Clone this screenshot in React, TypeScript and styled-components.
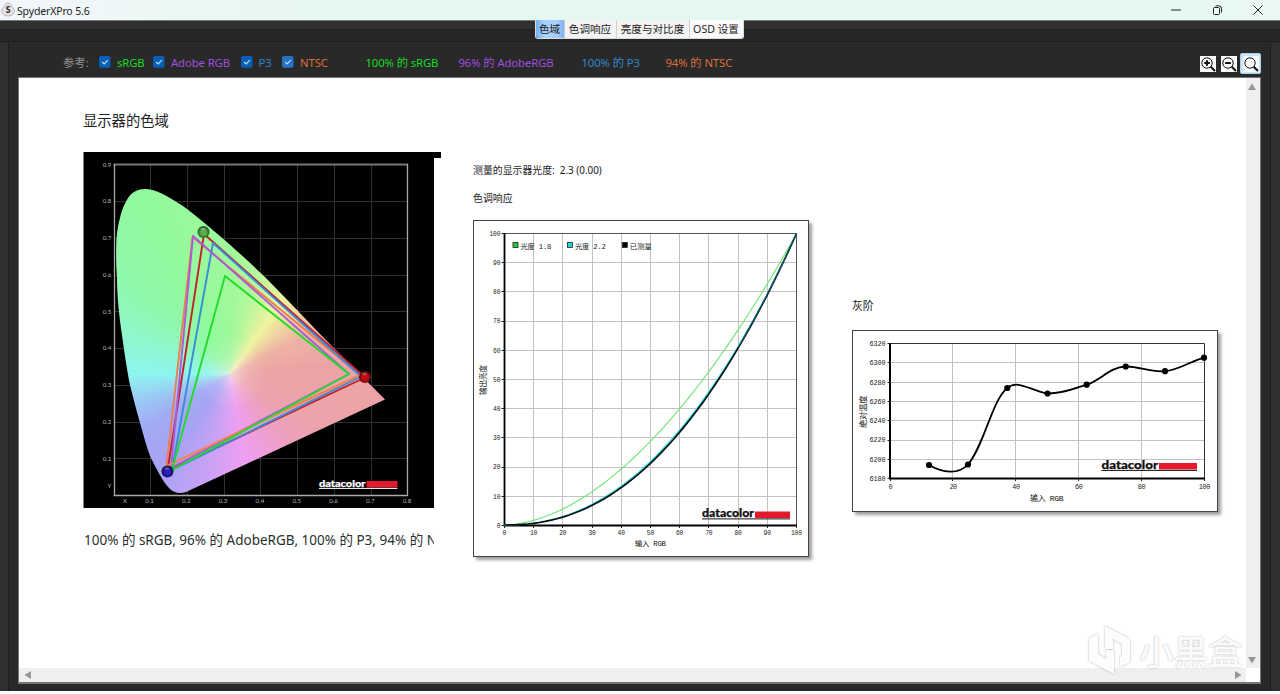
import React from "react";
import styled, { createGlobalStyle } from "styled-components";

const sans = `"Noto Sans", "Noto Sans CJK SC", sans-serif`;
const mono = `"Liberation Mono", "Noto Sans CJK SC", monospace`;

const Global = createGlobalStyle`
  * { box-sizing: border-box; }
  html, body { margin: 0; background: #fbfbfb; overflow: hidden; }
  body { font-family: ${sans}; color: #222; }
`;

const Window = styled.div`
  position: relative;
  width: 1280px;
  height: 694px;
  display: flex;
  flex-direction: column;
  overflow: hidden;
`;

const TitleBar = styled.header`
  height: 21px;
  flex: none;
  display: flex;
  align-items: center;
  padding: 0 16px 1px 1px;
  background: linear-gradient(90deg, #f4f5fb 0, #edf8f6 150px, #e4f7f0 420px, #e4f7f0 1150px, #ebf9f4 1280px);
  border-bottom: 1px solid #6f7b78;
`;

const AppName = styled.span`
  font-size: 10.5px;
  line-height: 20px;
  margin-left: 2px;
  padding-top: 2px;
  letter-spacing: -0.15px;
  color: #222;
`;

const WindowButtons = styled.div`
  display: flex;
  gap: 29px;
  margin-left: auto;
  height: 12px;
`;

const Body = styled.main`
  height: 670px;
  flex: none;
  display: flex;
  flex-direction: column;
  background: #282828;
`;

const TabStrip = styled.nav`
  height: 22px;
  flex: none;
  display: flex;
  justify-content: center;
  align-items: flex-start;
  padding-right: 2px;
  background: linear-gradient(#303030 0 8px, #1e1e1e 8px 9px, #262626 9px 20px, #1d1d1d 20px 21px, #2a2a2a 21px);
`;

const TabGroup = styled.div`
  display: flex;
  height: 19px;
  margin-top: -1px;
  border: 1px solid #d8dcdf;
  border-top: 0;
  border-radius: 0 0 3px 3px;
  overflow: hidden;
`;

const Tab = styled.button<{ $w: number; $active?: boolean }>`
  width: ${(p) => p.$w}px;
  padding: 1px 0 0;
  border: 0;
  border-right: 1px solid #cfcfcf;
  background: ${(p) => (p.$active ? "linear-gradient(90deg,#74b0f2,#a9d0fb 30%,#a9d0fb 75%,#78b2f2)" : "#f3f3f3")};
  font: 10.6px/17px ${sans};
  color: #1c1c1c;
  white-space: nowrap;
  &:last-child { border-right: 0; background: #fafafa; }
`;

const Frame = styled.div`
  flex: 1;
  display: flex;
  flex-direction: column;
  padding: 0 19px 7px 18px;
  background: linear-gradient(90deg, #303030 0 8px, #1e1e1e 8px 9px, #292929 9px 1270px, #1e1e1e 1270px 1271px, #303030 1271px);
`;

const Toolbar = styled.div`
  height: 34px;
  flex: none;
  display: flex;
  align-items: center;
  padding: 6px 0 0 45px;
`;

const Cell = styled.span<{ $w: number; $c: string }>`
  width: ${(p) => p.$w}px;
  flex: none;
  color: ${(p) => p.$c};
  font-size: 11.3px;
  letter-spacing: -0.1px;
  line-height: 16px;
  white-space: nowrap;
`;

const Check = styled.span<{ $light?: boolean }>`
  width: 18px;
  flex: none;
  height: 15px;
  svg { display: block; fill: ${(p) => (p.$light ? "#2673c4" : "#0a60b8")}; }
`;

const Tools = styled.div`
  display: flex;
  align-items: center;
  gap: 3px;
  margin-left: auto;
  padding-top: 1px;
`;

const Tool = styled.button<{ $active?: boolean }>`
  width: ${(p) => (p.$active ? 21 : 18)}px;
  height: 21px;
  padding: 0;
  display: flex;
  align-items: center;
  justify-content: ${(p) => (p.$active ? "center" : "flex-end")};
  border: ${(p) => (p.$active ? "1px solid #a9d4ee" : "0")};
  border-radius: 2px;
  background: ${(p) => (p.$active ? "#c9e5f6" : "transparent")};
  svg { flex: none; }
`;

const Viewport = styled.section`
  flex: 1;
  display: grid;
  grid-template-columns: 1fr 14px;
  grid-template-rows: 1fr 14px;
  border: 1px solid #777;
  border-bottom-width: 2px;
  background: #fff;
`;

const Page = styled.div`
  display: flex;
  padding: 32px 0 0 64px;
  align-items: flex-start;
  overflow: hidden;
`;

const Scroll = styled.div<{ $vertical?: boolean }>`
  display: flex;
  flex-direction: ${(p) => (p.$vertical ? "column" : "row")};
  justify-content: space-between;
  align-items: center;
  padding: ${(p) => (p.$vertical ? "5px 2px 4px 0" : "0 4px 0 5px")};
  background: #efefef;
`;

const GamutColumn = styled.article`
  width: 390px;
  flex: none;
`;

const ToneColumn = styled.article`
  width: 379px;
  flex: none;
  padding-top: 49px;
`;

const GrayColumn = styled.article`
  padding-top: 185px;
`;

const Heading = styled.h2<{ $size: number; $h: number }>`
  margin: 0;
  height: ${(p) => p.$h}px;
  font-weight: 400;
  font-size: ${(p) => p.$size}px;
  line-height: 22px;
  color: #222;
  white-space: nowrap;
`;

const Summary = styled.p`
  margin: 21px 0 0 1px;
  width: 350px;
  overflow: hidden;
  white-space: nowrap;
  font-size: 13.5px;
  line-height: 22px;
  color: #2b302d;
`;

const Card = styled.div<{ $w: number; $h: number }>`
  width: ${(p) => p.$w}px;
  height: ${(p) => p.$h}px;
  border: 1px solid #444;
  background: #fff;
  box-shadow: 3px 3px 3px rgba(0, 0, 0, 0.38);
  svg { display: block; margin: -1px; }
`;

const ColorWheel = styled.div`
  width: 300px;
  height: 330px;
  background:
    radial-gradient(circle at 117px 190px, rgba(248, 240, 240, 0.65) 0, rgba(248, 240, 240, 0.2) 16px, rgba(248, 240, 240, 0) 36px),
    conic-gradient(from 0deg at 117px 190px, #a0f89c 0deg, #b4f79c 14deg, #f0f3a0 36deg, #eeb4a4 62deg, #eda3a6 85deg, #eca3aa 120deg, #ee9fc8 145deg, #ee9ff0 170deg, #c7a2f5 195deg, #a8a2f4 215deg, #a2abf4 238deg, #9acdf4 255deg, #8ef5f0 270deg, #90f7d2 288deg, #90f8ab 312deg, #92fa9d 335deg, #a0f89c 360deg);
`;

const Watermark = styled.div`
  position: absolute;
  left: 1088px;
  top: 624px;
  display: flex;
  align-items: center;
  gap: 8px;
  font: 500 34.5px/52px "Noto Sans CJK SC", sans-serif;
  color: rgba(255, 255, 255, 0.96);
  text-shadow: 0 0 2px rgba(0, 0, 0, 0.3);
  svg { filter: drop-shadow(0 0 1px rgba(0, 0, 0, 0.3)); }
`;

const range = (n: number) => Array.from({ length: n }, (_, i) => i);

function Datacolor({ x, y, w, bar, color }: { x: number; y: number; w: number; bar: number; color: string }) {
  return (
    <g>
      <text x={x} y={y} textLength={w} lengthAdjust="spacingAndGlyphs" fontFamily="Lato, sans-serif" fontWeight="900" fontSize={w > 50 ? 11.3 : 10} fill={color} stroke={color} strokeWidth="0.25">
        datacolor
      </text>
      <rect x={x + w + 1} y={y - 5.5} width={bar} height={6.5} fill="#e21a2c" />
      <rect x={x} y={y + 1.4} width={w + bar + 1} height={1} fill={color} />
    </g>
  );
}

function Triangle({ d, color }: { d: string; color: string }) {
  return <polygon points={d} fill="none" stroke={color} strokeWidth="1.9" strokeLinejoin="round" />;
}

function Marker({ x, y, id }: { x: number; y: number; id: string }) {
  return (
    <g>
      <circle cx={x} cy={y} r="6" fill={`url(#${id})`} />
      <ellipse cx={x - 0.5} cy={y - 3} rx="2.6" ry="1.2" fill="#fff" opacity="0.25" />
    </g>
  );
}

function GamutChart() {
  const balls: [string, string, string][] = [
    ["ballG", "#5cb04e", "#1c5a20"],
    ["ballR", "#c80a12", "#5c0a10"],
    ["ballB", "#2a1fc0", "#10103c"],
  ];
  return (
    <svg width="358" height="356" viewBox="83 152 358 356" style={{ display: "block" }}>
      <defs>
        <clipPath id="locus">
          <path d="M145 189 C155 189 165 195 175 201 C187 208 197 217 208 226 C230 244 248 261 265 277 L298 311 L320 334 L385 399.500 L186 492 C179 494.500 173 492 170 489 C163 482 157 470 151 458 C147 449 143 433 140 423 C136 409 133 397 130 385 C127 370 124 350 122 335 C119 315 117 295 117 278 C116 265 116 254 116.300 242 C117 232 118 225 120 218 C122 209 125 203 128 198 C132 192 138 189 145 189Z" />
        </clipPath>
        {balls.map(([id, a, b]) => (
          <radialGradient id={id} key={id} cy="0.55">
            <stop offset="0" stopColor={a} />
            <stop offset="0.4" stopColor={a} />
            <stop offset="1" stopColor={b} />
          </radialGradient>
        ))}
      </defs>
      <rect x="83.500" y="152" width="350.500" height="356" fill="#000" />
      <rect x="434" y="152" width="7" height="6" fill="#000" />
      <g stroke="#303030" strokeWidth="1">
        {range(7).map((i) => <path key={i} d={`M${Math.round(150 + i * 36.8)}.500 165V495`} />)}
        {range(8).map((i) => <path key={i} d={`M115 ${Math.round(201 + i * 36.75)}.500H407`} />)}
      </g>
      <path d="M113.500 164.500H408" stroke="#777" strokeWidth="2" />
      <path d="M114.500 164V496M113.500 495.500H408M407.500 164V496" stroke="#aaa" strokeWidth="1.3" />
      <g clipPath="url(#locus)">
        <foreignObject x="113" y="184" width="300" height="330">
          <ColorWheel />
        </foreignObject>
      </g>
      <Triangle d="192.5,237 360,375 166.500,466" color="#f07c50" />
      <Triangle d="204,234 365,377.500 167.500,471" color="#c4202a" />
      <Triangle d="213,243 361,376.500 172,470" color="#3a8cd8" />
      <Triangle d="193,236 349,374 171,468" color="#a75cd8" />
      <path d="M166.500 466L360 375" stroke="#f68452" strokeWidth="1.500" />
      <Triangle d="225,276 349,374 172,470" color="#20dc28" />
      <Marker x={203.500} y={232} id="ballG" />
      <Marker x={365} y={377} id="ballR" />
      <Marker x={167.500} y={471.500} id="ballB" />
      <g fontFamily="Lato, sans-serif" fontSize="6.2" fill="#b5b5b5" textAnchor="middle">
        {range(9).map((i) => (
          <text key={i} x="107" y={166.500 + i * 36.75}>{(0.9 - i / 10).toFixed(1)}</text>
        ))}
        {range(8).map((i) => (
          <text key={i} x={149.500 + i * 36.8} y="503">{((i + 1) / 10).toFixed(1)}</text>
        ))}
        <text x="125" y="503">X</text>
        <text x="109.500" y="488">Y</text>
      </g>
      <Datacolor x={319} y={486.500} w={46.500} bar={31} color="#fff" />
    </svg>
  );
}

const toneCurve = (gamma: number, from = 0) =>
  "M" + range(51).slice(from).map((i) => `${504.5 + i * 5.84} ${(525 - 291.5 * Math.pow(i / 50, gamma)).toFixed(2)}`).join("L");

function ToneChart() {
  const legend: [number, string, string, number][] = [
    [513, "#19d52b", "光度 1.8", 31],
    [567.500, "#1cd8dc", "光度 2.2", 31],
    [622.300, "#000", "已测量", 22],
  ];
  return (
    <svg width="336" height="337" viewBox="473 220 336 337" fontFamily={mono}>
      <g stroke="#c2c2c2">
        {range(10).map((i) => <path key={i} d={`M${Math.round(504 + (i + 1) * 29.2)}.500 233V525`} />)}
        {range(10).map((i) => <path key={i} d={`M505 ${Math.round(233 + i * 29.2)}.500H797`} />)}
      </g>
      <path d="M504 233.500H796.500V525" fill="none" stroke="#555" />
      <path d="M504.500 233V526.500M503.500 525.500H797" stroke="#000" strokeWidth="1.800" />
      <g stroke="#222" strokeWidth="1">
        {range(11).map((i) => <path key={i} d={`M501.500 ${Math.round(233 + i * 29.2)}.500H504M${Math.round(504 + i * 29.2)}.500 526V528`} />)}
      </g>
      <path d={toneCurve(1.8)} fill="none" stroke="#6fe473" strokeWidth="1.100" />
      <path d={toneCurve(2.2)} fill="none" stroke="#28d8dc" strokeWidth="1.4" />
      <path d={toneCurve(2.24)} fill="none" stroke="#0a0f12" strokeWidth="1.700" />
      <path d={toneCurve(2.22, 40)} fill="none" stroke="#1c6c76" strokeWidth="0.9" />
      <g fontSize="6.300" fill="#222">
        {range(11).map((i) => {
          const label = String(i * 10);
          const len = label.length * 3.7;
          return (
            <g key={i}>
              <text x="500.500" y={527.700 - i * 29.2} textAnchor="end" textLength={len}>{label}</text>
              <text x={504.500 + i * 29.2} y="535.200" textAnchor="middle" textLength={len}>{label}</text>
            </g>
          );
        })}
      </g>
      {legend.map(([x, c, t, len]) => (
        <g key={t}>
          <rect x={x} y="242.500" width="5" height="5" fill={c} stroke="#222" strokeWidth="0.8" />
          <text x={x + 7.500} y="248.500" fontSize="7.300" fill="#222" textLength={len}>{t}</text>
        </g>
      ))}
      <text x="635" y="546" fontSize="7.300" fill="#111" textLength="31">输入 RGB</text>
      <text transform="translate(485.500 395) rotate(-90)" fontSize="7.600" fill="#111" textLength="30">输出亮度</text>
      <Datacolor x={702} y={517} w={52} bar={35} color="#111" />
    </svg>
  );
}

function GrayChart() {
  const points = [
    [929, 465], [968, 464.5], [1007.3, 388], [1047.5, 393.5],
    [1086.7, 384.7], [1125.7, 366.5], [1165, 371.2], [1204, 357.7],
  ];
  return (
    <svg width="366" height="182" viewBox="852 330 366 182" fontFamily={mono}>
      <g stroke="#c2c2c2">
        {range(5).map((i) => <path key={i} d={`M${Math.round(889.500 + (i + 1) * 62.8)}.500 344V478`} />)}
        {range(7).map((i) => <path key={i} d={`M891 ${Math.round(343 + i * 19.3)}.500H1204`} />)}
      </g>
      <path d="M890 343.500H1204.500V478" fill="none" stroke="#333" />
      <path d="M890 343V479.500M889 478.500H1205" stroke="#000" strokeWidth="2" />
      <g stroke="#222">
        {range(8).map((i) => <path key={i} d={`M887.500 ${Math.round(343 + i * 19.3)}.500H890`} />)}
        {range(6).map((i) => <path key={i} d={`M${Math.round(889.500 + i * 62.8)}.500 479V481`} />)}
      </g>
      <path
        d="M929 465C943 473 958 475 968 464.500C984 446 992 400 1007.300 388C1018 379 1031 391 1047.500 393.500C1061 394 1073 389 1086.700 384.700C1101 380 1110 367 1125.700 366.500C1139 366 1151 373 1165 371.200C1179 370 1191 361 1204 357.700"
        fill="none" stroke="#000" strokeWidth="1.800"
      />
      {points.map(([x, y]) => <circle key={x} cx={x} cy={y} r="3.100" fill="#000" />)}
      <g fontSize="6.800" fill="#222">
        {range(8).map((i) => (
          <text key={i} x="885.500" y={345.900 + i * 19.3} textAnchor="end" textLength="16">{6320 - i * 20}</text>
        ))}
        {range(6).map((i) => {
          const label = String(i * 20);
          return <text key={i} x={890.500 + i * 62.8} y="489" textAnchor="middle" textLength={label.length * 3.9}>{label}</text>;
        })}
      </g>
      <text x="1030" y="500.500" fontSize="8" fill="#111" textLength="33.500">输入 RGB</text>
      <text transform="translate(865.500 428) rotate(-90)" fontSize="8.200" fill="#111" textLength="32.500">绝对温度</text>
      <Datacolor x={1101.500} y={468.500} w={56.500} bar={38} color="#111" />
    </svg>
  );
}

function Magnifier({ sign }: { sign?: "plus" | "minus" }) {
  return (
    <svg width="16" height="16" viewBox="0 0 16 16" fill="none" stroke="#111">
      <rect width="16" height="16" fill="#fafafa" stroke="none" />
      <circle cx="7" cy="7" r="5.200" strokeWidth="1" />
      <path d="M10.700 10.700L15 15" strokeWidth="2" />
      {sign && <path d="M4.200 7H9.800" strokeWidth="2" />}
      {sign === "plus" && <path d="M7 4.200V9.800" strokeWidth="2" />}
    </svg>
  );
}

function Checkbox({ light }: { light?: boolean }) {
  return (
    <Check $light={light}>
      <svg width="12" height="12" viewBox="0 0 12 12">
        <rect x="0" y="0" width="11.500" height="11.800" rx="2" />
        <path d="M3.200 6L5.200 8L8.800 4.200" fill="none" stroke="#c6def5" strokeWidth="1.100" />
      </svg>
    </Check>
  );
}

function Arrow({ d }: { d: string }) {
  return <svg width="8" height="8" viewBox="0 0 8 8"><path d={d} fill="#969696" /></svg>;
}

const references = [
  { name: "sRGB", w: 36, color: "#14dc20" },
  { name: "Adobe RGB", w: 69.5, color: "#a04ede" },
  { name: "P3", w: 23.5, color: "#3186cc" },
  { name: "NTSC", w: 65.5, color: "#dd6e3c", light: true },
];

const coverage = [
  { text: "100% 的 sRGB", w: 93, color: "#14dc20" },
  { text: "96% 的 AdobeRGB", w: 123, color: "#a04ede" },
  { text: "100% 的 P3", w: 84, color: "#3186cc" },
  { text: "94% 的 NTSC", w: 80, color: "#dd6e3c" },
];

const windowIcons = [
  "M1 6H11",
  "M2.500 4.500Q2.500 3.500 3.500 3.500H7.500Q8.500 3.500 8.500 4.500V9.500Q8.500 10.500 7.500 10.500H3.500Q2.500 10.500 2.500 9.500ZM4.500 2Q8 1.500 9 2Q10.500 2.500 10.500 5V8.500",
  "M1.500 1.500L10.500 10.500M10.500 1.500L1.500 10.500",
];

export default function App() {
  return (
    <Window>
      <Global />
      <TitleBar>
        <svg width="14" height="15" viewBox="0 0 14 15">
          <path d="M7 1C4.500 1 3.700 3 3 5C0 7 0 11 3 13C5.500 14.300 8.500 14.300 11 13C14 11 14 7 11 5C10.300 3 9.500 1 7 1Z" fill="#e4e4e6" stroke="#aaa" strokeWidth="0.8" />
          <text x="7" y="11" textAnchor="middle" fontFamily="Lato, sans-serif" fontWeight="900" fontSize="8.500" fill="#222">S</text>
        </svg>
        <AppName>SpyderXPro 5.6</AppName>
        <WindowButtons>
          {windowIcons.map((d) => (
            <svg key={d} width="12" height="12" viewBox="0 0 12 12" fill="none" stroke="#222" strokeWidth="1"><path d={d} /></svg>
          ))}
        </WindowButtons>
      </TitleBar>
      <Body>
        <TabStrip>
          <TabGroup>
            <Tab $w={29} $active>色域</Tab>
            <Tab $w={52}>色调响应</Tab>
            <Tab $w={73}>亮度与对比度</Tab>
            <Tab $w={53}>OSD 设置</Tab>
          </TabGroup>
        </TabStrip>
        <Frame>
          <Toolbar>
            <Cell $w={36} $c="#929292">参考:</Cell>
            {references.map((r) => (
              <React.Fragment key={r.name}>
                <Checkbox light={r.light} />
                <Cell $w={r.w} $c={r.color}>{r.name}</Cell>
              </React.Fragment>
            ))}
            {coverage.map((c) => (
              <Cell key={c.text} $w={c.w} $c={c.color}>{c.text}</Cell>
            ))}
            <Tools>
              <Tool><Magnifier sign="plus" /></Tool>
              <Tool><Magnifier sign="minus" /></Tool>
              <Tool $active><Magnifier /></Tool>
            </Tools>
          </Toolbar>
          <Viewport>
            <Page>
              <GamutColumn>
                <Heading $size={14.3} $h={42}>显示器的色域</Heading>
                <GamutChart />
                <Summary>100% 的 sRGB, 96% 的 AdobeRGB, 100% 的 P3, 94% 的 NTSC</Summary>
              </GamutColumn>
              <ToneColumn>
                <Heading $size={9.9} $h={28}>测量的显示器光度:&nbsp; 2.3 (0.00)</Heading>
                <Heading $size={9.9} $h={33}>色调响应</Heading>
                <Card $w={336} $h={337}><ToneChart /></Card>
              </ToneColumn>
              <GrayColumn>
                <Heading $size={10.8} $h={35}>灰阶</Heading>
                <Card $w={366} $h={182}><GrayChart /></Card>
              </GrayColumn>
            </Page>
            <Scroll $vertical>
              <Arrow d="M4 0.500L8 7H0Z" />
              <Arrow d="M0 1H8L4 7.500Z" />
            </Scroll>
            <Scroll>
              <Arrow d="M7 0V8L0.500 4Z" />
              <Arrow d="M1 0V8L7.500 4Z" />
            </Scroll>
          </Viewport>
        </Frame>
      </Body>
      <Watermark>
        <svg width="43" height="52" viewBox="0 0 43 52" fill="rgba(255,255,255,0.96)">
          <path d="M17 2L42 15V38L32 43V33L34 31V20L25 15V25H17Z" />
          <path d="M26 50L1 37V14L10 10V30L18 35V26H26Z" />
        </svg>
        <span>小黑盒</span>
      </Watermark>
    </Window>
  );
}
